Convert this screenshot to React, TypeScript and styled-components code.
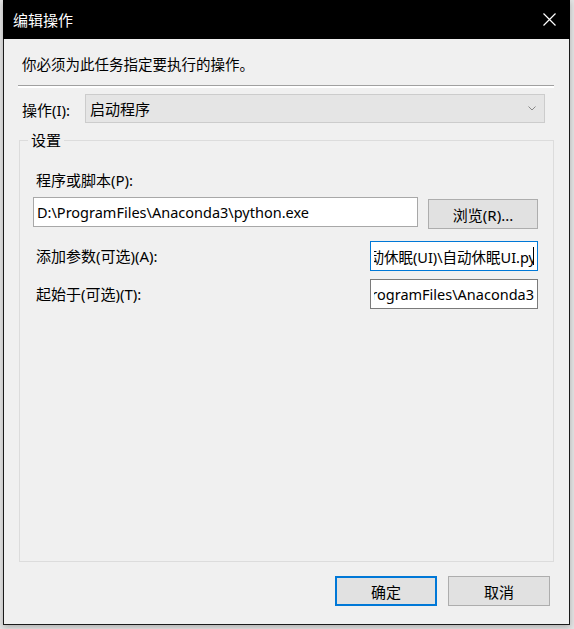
import React from "react";
import styled, { createGlobalStyle } from "styled-components";

const Global = createGlobalStyle`
  html, body { margin: 0; padding: 0; }
  body {
    background: #e4e4e4;
    width: 574px;
    height: 629px;
    overflow: hidden;
    font-family: "Noto Sans", "Noto Sans CJK SC", sans-serif;
  }
`;

const Page = styled.div`
  width: 574px;
  height: 629px;
  padding-left: 3px;
  box-sizing: border-box;
`;

const Window = styled.div`
  width: 567px;
  height: 625px;
  box-sizing: border-box;
  background: #f0f0f0;
  border: 1px solid #1a1a1a;
  border-top: none;
  display: flex;
  flex-direction: column;
  box-shadow: 0 2px 6px rgba(0, 0, 0, 0.25);
`;

const TitleBar = styled.div`
  height: 39px;
  flex: none;
  background: #000;
  color: #fff;
  display: flex;
  align-items: center;
  justify-content: space-between;
  padding: 0 14px 0 10px;
  font-size: 15px;
  margin: 0 -1px;
`;

const TitleText = styled.span`
  line-height: 20px;
`;

const CloseIcon = styled.svg`
  width: 13px;
  height: 13px;
  display: block;
`;

const Instruction = styled.div`
  margin: 15px 0 0 18px;
  font-size: 14.5px;
  line-height: 20px;
  color: #000;
`;

const Separator = styled.div`
  margin: 11px 15px 0 14px;
  height: 0;
  border-top: 1px solid #a0a0a0;
  border-bottom: 2px solid #ffffff;
`;

const OpRow = styled.div`
  display: flex;
  align-items: center;
  margin: 6px 24px 0 18px;
`;

const Label = styled.span`
  font-size: 15px;
  line-height: 20px;
  color: #000;
  white-space: nowrap;
`;

const OpLabel = styled(Label)`
  width: 63px;
  flex: none;
  padding-top: 2px;
`;

const Combo = styled.div`
  flex: 1;
  height: 29px;
  box-sizing: border-box;
  background: #e5e5e5;
  border: 1px solid #cccccc;
  display: flex;
  align-items: center;
  justify-content: space-between;
  padding: 0 8px 0 4px;
  font-size: 15px;
`;

const Chevron = styled.svg`
  width: 8px;
  height: 5px;
  display: block;
`;

const Group = styled.fieldset`
  flex: 1;
  margin: 9px 15px 0 15px;
  padding: 0 15px 0 13px;
  border: 1px solid #dcdcdc;
  min-width: 0;
  display: flex;
  flex-direction: column;
`;

const Legend = styled.legend`
  font-size: 15px;
  line-height: 16px;
  padding: 0 3px;
  margin-left: -5px;
  color: #000;
`;

const FieldLabel = styled(Label)`
  display: block;
  margin: 22px 0 0 3px;
`;

const ProgramRow = styled.div`
  display: flex;
  align-items: flex-start;
  gap: 10px;
  margin-top: 7px;
`;

const TextBox = styled.div<{ $border: string; $width?: number }>`
  ${(p) => (p.$width ? `width: ${p.$width}px; flex: none;` : "flex: 1;")}
  height: 30px;
  box-sizing: border-box;
  background: #fff;
  border: 1px solid ${(p) => p.$border};
  display: flex;
  align-items: center;
  overflow: hidden;
  padding: 0 3px;
  font-size: 14.5px;
  color: #000;
  white-space: nowrap;
`;

const Scrolled = styled.div`
  flex: 1;
  min-width: 0;
  display: flex;
  justify-content: flex-end;
  align-items: center;
  overflow: hidden;
`;

const ScrollText = styled.span`
  flex: none;
`;

const Caret = styled.span`
  flex: none;
  width: 1px;
  height: 18px;
  background: #000;
  margin-left: -3px;
`;

const Button = styled.button<{ $default?: boolean }>`
  width: 102px;
  height: 30px;
  box-sizing: border-box;
  background: #e1e1e1;
  border: ${(p) => (p.$default ? "2px solid #0078d7" : "1px solid #adadad")};
  font-family: "Noto Sans", "Noto Sans CJK SC", sans-serif;
  font-size: 15px;
  color: #000;
  padding: 0;
  flex: none;
`;

const BrowseButton = styled(Button)`
  width: 110px;
  margin-top: 2px;
`;

const OptionGrid = styled.div`
  display: grid;
  grid-template-columns: 1fr 168px;
  align-items: center;
  row-gap: 8px;
  margin-top: 12px;
`;

const OptionLabel = styled(Label)`
  padding-left: 3px;
`;

const Footer = styled.div`
  display: flex;
  justify-content: flex-end;
  gap: 11px;
  margin: 14px 19px 18px 0;
  flex: none;
`;

export default function App() {
  return (
    <>
      <Global />
      <Page>
        <Window>
          <TitleBar>
            <TitleText>编辑操作</TitleText>
            <CloseIcon viewBox="0 0 13 13">
              <path d="M0.5 0.5 L12.5 12.5 M12.5 0.5 L0.5 12.5" stroke="#fff" strokeWidth="1.2" fill="none" />
            </CloseIcon>
          </TitleBar>
          <Instruction>你必须为此任务指定要执行的操作。</Instruction>
          <Separator />
          <OpRow>
            <OpLabel>操作(I):</OpLabel>
            <Combo>
              <span>启动程序</span>
              <Chevron viewBox="0 0 8 5">
                <path d="M0.5 0.5 L4 4 L7.5 0.5" stroke="#888" strokeWidth="1" fill="none" />
              </Chevron>
            </Combo>
          </OpRow>
          <Group>
            <Legend>设置</Legend>
            <FieldLabel>程序或脚本(P):</FieldLabel>
            <ProgramRow>
              <TextBox $border="#a8a8a8">D:\ProgramFiles\Anaconda3\python.exe</TextBox>
              <BrowseButton>浏览(R)...</BrowseButton>
            </ProgramRow>
            <OptionGrid>
              <OptionLabel>添加参数(可选)(A):</OptionLabel>
              <TextBox $border="#0078d7" $width={168}>
                <Scrolled>
                  <ScrollText>D:\自动休眠(UI)\自动休眠UI.py</ScrollText>
                  <Caret />
                </Scrolled>
              </TextBox>
              <OptionLabel>起始于(可选)(T):</OptionLabel>
              <TextBox $border="#7a7a7a" $width={168}>
                <Scrolled>
                  <ScrollText>D:\ProgramFiles\Anaconda3</ScrollText>
                </Scrolled>
              </TextBox>
            </OptionGrid>
          </Group>
          <Footer>
            <Button $default>确定</Button>
            <Button>取消</Button>
          </Footer>
        </Window>
      </Page>
    </>
  );
}
